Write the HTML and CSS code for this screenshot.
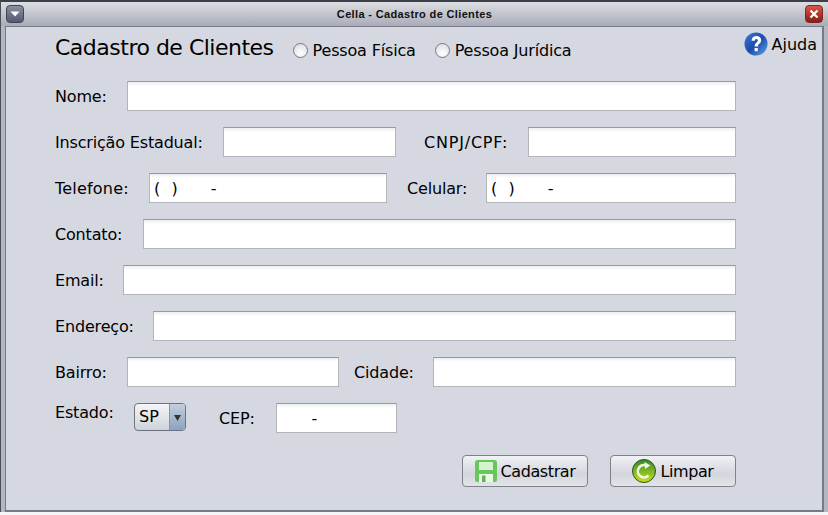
FILE: index.html
```html
<!DOCTYPE html>
<html>

<head>
    <title>Cella - Cadastro de Clientes</title>
    <link rel="stylesheet" href="styles.css">
</head>

<body>
    <div class="window">
        <div class="titlebar">
            <button class="menu-btn" type="button">
                <svg width="10" height="6" viewBox="0 0 10 6"><path d="M0.5 0.5H9.5L5 5.5Z" fill="#fff" /></svg>
            </button>
            <span class="title">Cella - Cadastro de Clientes</span>
            <button class="close-btn" type="button">
                <svg width="10" height="10" viewBox="0 0 10 10"><path d="M1.5 1.5L8.5 8.5M8.5 1.5L1.5 8.5" stroke="#fff" stroke-width="2.2" /></svg>
            </button>
        </div>

        <div class="content">
            <div class="header">
                <h1>Cadastro de Clientes</h1>
                <label class="radio first"><span class="dot"></span>Pessoa Física</label>
                <label class="radio"><span class="dot"></span>Pessoa Jurídica</label>
                <span class="help">
                    <svg width="24" height="24" viewBox="0 0 24 24">
                        <defs>
                            <linearGradient id="helpFill" x1="0" y1="0" x2="1" y2="1">
                                <stop offset="0" stop-color="#3a7ad8" />
                                <stop offset="0.5" stop-color="#1c4cab" />
                                <stop offset="1" stop-color="#62a4ee" />
                            </linearGradient>
                        </defs>
                        <circle cx="12" cy="12" r="11.5" fill="url(#helpFill)" />
                        <path d="M7.6 8.8C7.6 5.8 9.6 4 12.4 4C15.2 4 17.2 5.7 17.2 8.2C17.2 11.4 13.8 11.6 13.8 14.6H10.6C10.6 10.8 13.8 10.6 13.8 8.6C13.8 7.6 13.2 7 12.3 7C11.3 7 10.8 7.8 10.8 8.8Z" fill="#fff" />
                        <rect x="10.6" y="16" width="3.2" height="3.2" rx="0.6" fill="#fff" />
                    </svg>
                    Ajuda
                </span>
            </div>

            <div class="form">
                <div class="row">
                    <label class="w-nome">Nome:</label>
                    <input class="grow" type="text">
                </div>
                <div class="row">
                    <label class="w-inscricao">Inscrição Estadual:</label>
                    <input class="w-173" type="text">
                    <label class="w-cnpj">CNPJ/CPF:</label>
                    <input class="grow" type="text">
                </div>
                <div class="row">
                    <label class="w-telefone">Telefone:</label>
                    <input class="w-238 mask" type="text" value="(  )      -">
                    <label class="w-celular">Celular:</label>
                    <input class="grow mask" type="text" value="(  )      -">
                </div>
                <div class="row">
                    <label class="w-contato">Contato:</label>
                    <input class="grow" type="text">
                </div>
                <div class="row">
                    <label class="w-email">Email:</label>
                    <input class="grow" type="text">
                </div>
                <div class="row">
                    <label class="w-endereco">Endereço:</label>
                    <input class="grow" type="text">
                </div>
                <div class="row">
                    <label class="w-nome">Bairro:</label>
                    <input class="w-212" type="text">
                    <label class="w-cidade">Cidade:</label>
                    <input class="grow" type="text">
                </div>
                <div class="row">
                    <label class="w-estado">Estado:</label>
                    <div class="select">
                        <span class="select-value">SP</span>
                        <span class="select-arrow">
                            <svg width="7" height="7" viewBox="0 0 7 7"><path d="M0 1H7L3.5 7Z" fill="#333" /></svg>
                        </span>
                    </div>
                    <label class="w-cep">CEP:</label>
                    <input class="w-121" type="text" value="      -">
                </div>
            </div>

            <div class="actions">
                <button class="action" type="button">
                    <svg width="22" height="22" viewBox="0 0 22 22">
                        <rect x="0" y="0" width="22" height="22" rx="2.5" fill="#68c75c" />
                        <rect x="4" y="2" width="14" height="8" fill="#d6f2d0" />
                        <rect x="4" y="14" width="14" height="8" fill="#e9f7e4" />
                        <rect x="7" y="15.5" width="3.5" height="6.5" fill="#5cb850" />
                    </svg>
                    Cadastrar
                </button>
                <button class="action" type="button">
                    <svg width="24" height="24" viewBox="0 0 24 24">
                        <defs>
                            <linearGradient id="limpFill" x1="0" y1="0" x2="0" y2="1">
                                <stop offset="0" stop-color="#2f8a2e" />
                                <stop offset="1" stop-color="#cbe01e" />
                            </linearGradient>
                        </defs>
                        <circle cx="12" cy="12" r="11.5" fill="url(#limpFill)" stroke="#2c4f2a" stroke-width="1" />
                        <path d="M16.5 16.5A6.2 6.2 0 1 1 14.5 6.5" fill="none" stroke="#eef6dc" stroke-width="2.6" />
                        <path d="M12.5 3L18.5 6.5L13 10Z" fill="#eef6dc" />
                    </svg>
                    Limpar
                </button>
            </div>
        </div>
    </div>
</body>

</html>
```

FILE: styles.css
```css
* {
    box-sizing: border-box;
}

html,
body {
    margin: 0;
    height: 100%;
}

body {
    font-family: "DejaVu Sans", sans-serif;
    font-size: 16px;
    color: #000;
    background-color: #f4f5f7;
}

.window {
    width: 828px;
    height: 512px;
    display: flex;
    flex-direction: column;
    background-color: #b4b7c0;
    border-top: 2px solid #3b3f4a;
    border-left: 1px solid #4a4e58;
}

.titlebar {
    height: 24px;
    flex: none;
    display: flex;
    align-items: center;
    justify-content: space-between;
    padding: 0 5px 1px 5px;
    background: linear-gradient(#dcdee2, #a9acb7);
}

.title {
    font-family: "Liberation Sans", sans-serif;
    font-size: 11px;
    font-weight: bold;
    letter-spacing: 0.35px;
    color: #111;
}

.menu-btn,
.close-btn {
    width: 18px;
    height: 18px;
    padding: 0;
    border: 1px solid #3f4552;
    border-radius: 4px;
    display: flex;
    align-items: center;
    justify-content: center;
}

.menu-btn {
    background: linear-gradient(#8a90a2, #525a70);
}

.close-btn {
    background: linear-gradient(#d9564a, #8c1b14);
    border-color: #7a2a24;
}

.content {
    flex: 1;
    margin: 0 4px 0 4px;
    padding: 0 11px 0 49px;
    background-color: #d5d8e0;
    border: solid 1px #767a85;
    border-bottom-width: 2px;
    border-right-width: 2px;
    display: flex;
    flex-direction: column;
}

.header {
    height: 54px;
    display: flex;
    align-items: center;
    padding-bottom: 14px;
}

h1 {
    margin: 0;
    font-size: 22px;
    font-weight: normal;
    letter-spacing: -0.5px;
}

.radio {
    display: flex;
    align-items: center;
    gap: 5px;
    letter-spacing: -0.17px;
    margin-top: 6px;
}

.radio.first {
    margin-left: 19px;
    margin-right: 19px;
}

.dot {
    width: 15px;
    height: 15px;
    border-radius: 50%;
    border: 1px solid #767a85;
    background: radial-gradient(circle at 50% 70%, #fff, #d6d9de);
}

.help {
    margin-left: auto;
    margin-right: -6px;
    margin-top: -6px;
    display: flex;
    align-items: center;
    gap: 4px;
}

.form {
    display: flex;
    flex-direction: column;
    gap: 16px;
    padding-right: 75px;
}

.row {
    display: flex;
    align-items: center;
    height: 30px;
}

.row label {
    flex: none;
    letter-spacing: -0.17px;
}

input {
    height: 30px;
    padding: 0 4px;
    font-family: "DejaVu Sans", sans-serif;
    font-size: 16px;
    color: #000;
    background: linear-gradient(#eceef0, #fff 4px);
    border: 1px solid #b3b5b8;
    border-top-color: #97999d;
    outline: none;
    white-space: pre;
}

.mask {
    letter-spacing: 0.35px;
}

.grow {
    flex: 1;
    min-width: 0;
}

.w-173 { width: 173px; }
.w-238 { width: 238px; }
.w-212 { width: 212px; }
.w-121 { width: 121px; }

.w-nome { width: 72px; }
.w-inscricao { width: 168px; }
.row .w-telefone { width: 94px; letter-spacing: 0.2px; }
.w-contato { width: 88px; }
.w-email { width: 68px; }
.w-endereco { width: 98px; }
.row .w-estado { width: 79px; position: relative; top: -6px; }

.row .w-cnpj { width: 104px; margin-left: 28px; letter-spacing: 0.8px; }
.w-celular { width: 79px; margin-left: 20px; }
.w-cidade { width: 79px; margin-left: 15px; }
.w-cep { width: 57px; margin-left: 33px; }

.select {
    width: 52px;
    height: 28px;
    margin-top: -2px;
    display: flex;
    border: 1px solid #6b7484;
    border-radius: 4px;
    overflow: hidden;
    background: linear-gradient(#f4f5f7, #cfd3da);
}

.select-value {
    flex: 1;
    line-height: 26px;
    padding-left: 4px;
}

.select-arrow {
    width: 16px;
    display: flex;
    align-items: center;
    justify-content: center;
    background: linear-gradient(#c3cfdc, #8ba3bd);
    border-left: 1px solid #8a94a3;
}

.actions {
    display: flex;
    justify-content: flex-end;
    gap: 22px;
    padding-right: 75px;
    margin-top: 22px;
}

.action {
    width: 126px;
    height: 32px;
    padding: 0;
    display: flex;
    align-items: center;
    justify-content: center;
    gap: 4px;
    font-family: "DejaVu Sans", sans-serif;
    font-size: 16px;
    letter-spacing: -0.4px;
    color: #000;
    border: 1px solid #7e8188;
    border-radius: 4px;
    background: linear-gradient(#f1f2f5, #d3d6dd 60%, #e2e4e9);
}
```
